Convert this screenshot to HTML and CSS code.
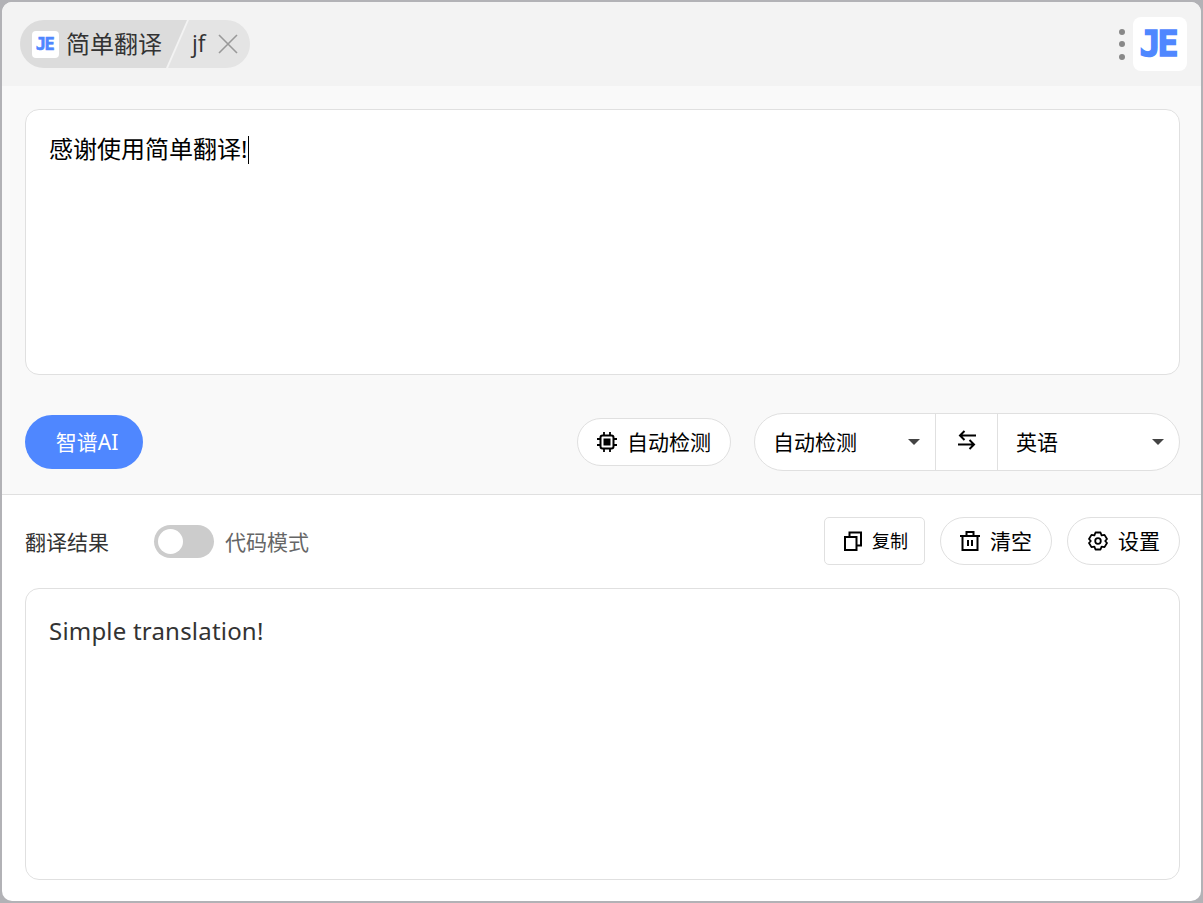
FILE: index.html
```html
<!DOCTYPE html>
<html lang="zh-CN">
<head>
    <meta charset="UTF-8">
    <title>简单翻译</title>
    <link rel="stylesheet" href="styles.css">
</head>
<body>

<div class="window">
    <header class="topbar">
        <div class="tab">
            <div class="tab-main">
                <span class="logo logo-small">JE</span>
                <span class="tab-name">简单翻译</span>
            </div>
            <div class="tab-key">
                <span class="tab-name tab-shortcut">jf</span>
                <svg class="tab-close" viewBox="0 0 20 20" width="20" height="20"><path d="M1 1 19 19M19 1 1 19"/></svg>
            </div>
        </div>
        <div class="topbar-right">
            <div class="dots"><i></i><i></i><i></i></div>
            <span class="logo logo-big">JE</span>
        </div>
    </header>

    <section class="input-panel">
        <div class="text-box input-box">感谢使用简单翻译!<span class="caret"></span></div>
        <div class="toolbar">
            <button class="engine-btn">智谱AI</button>
            <div class="toolbar-right">
                <button class="chip chip-narrow">
                    <svg viewBox="0 0 20 20" width="20" height="20">
                        <rect x="3.500" y="3.500" width="13" height="13" rx="2" fill="none" stroke="#000" stroke-width="2"/>
                        <rect x="6.500" y="6.500" width="7" height="7" fill="#000"/>
                        <path d="M7 0v3M13 0v3M7 17v3M13 17v3M0 7h3M0 13h3M17 7h3M17 13h3" stroke="#000" stroke-width="1.800"/>
                    </svg>
                    <span class="label">自动检测</span>
                </button>
                <div class="lang-picker">
                    <div class="lang lang-from"><span class="label">自动检测</span><i class="arrow"></i></div>
                    <div class="swap">
                        <svg viewBox="0 0 20 20" width="20" height="20"><path d="M19 5.500H3M7.500 1 3 5.500 7.500 10M1 14.500H17M12.500 10 17 14.500 12.500 19" fill="none" stroke="#000" stroke-width="2"/></svg>
                    </div>
                    <div class="lang lang-to"><span class="label">英语</span><i class="arrow"></i></div>
                </div>
            </div>
        </div>
    </section>

    <section class="result-panel">
        <div class="result-head">
            <span class="result-title">翻译结果</span>
            <div class="toggle"><i></i></div>
            <span class="toggle-label">代码模式</span>
            <div class="actions">
                <button class="chip copy-btn">
                    <svg viewBox="0 0 20 20" width="20" height="20"><path d="M2 6h11.500V19H2zM6.500 6V1.500H18V14.500h-4.500" fill="none" stroke="#000" stroke-width="2"/></svg>
                    <span class="label">复制</span>
                </button>
                <button class="chip chip-narrow">
                    <svg viewBox="0 0 20 20" width="20" height="20"><path d="M0 5h20M6.500 5V1h7V5M2.500 5v14h15V5M8 9v6M12 9v6" fill="none" stroke="#000" stroke-width="2"/></svg>
                    <span class="label">清空</span>
                </button>
                <button class="chip">
                    <svg viewBox="0 0 20 20" width="20" height="20"><path d="M7.500 1.500h5L13.600 4.300 16.500 3.900 19 8 17.200 10 19 12 16.500 16.100 13.600 15.700 12.500 18.500h-5L6.400 15.700 3.500 16.100 1 12 2.800 10 1 8 3.500 3.900 6.400 4.300Z" fill="none" stroke="#000" stroke-width="1.800" stroke-linejoin="round"/><circle cx="10" cy="10" r="2.800" fill="none" stroke="#000" stroke-width="1.800"/></svg>
                    <span class="label">设置</span>
                </button>
            </div>
        </div>
        <div class="text-box output-box">Simple translation!</div>
    </section>
</div>

</body>
</html>
```

FILE: styles.css
```css
* {
    box-sizing: border-box;
}
html, body {
    height: 100%;
}
body {
    margin: 0;
    padding: 2px;
    overflow: hidden;
    background-color: #b2b2b6;
    font-family: "Noto Sans", "Noto Sans CJK SC", sans-serif;
    font-size: 21px;
    color: #000;
}
button {
    font: inherit;
    color: inherit;
    cursor: pointer;
}
.window {
    height: 100%;
    display: flex;
    flex-direction: column;
    background: white;
    border-radius: 10px;
    overflow: hidden;
}

/* top bar */
.topbar {
    height: 84px;
    flex: none;
    display: flex;
    align-items: center;
    justify-content: space-between;
    padding: 0 14px 0 18px;
    background-color: #f3f3f3;
}
.tab {
    display: flex;
    height: 48px;
    width: 230px;
    border-radius: 24px;
    overflow: hidden;
    font-size: 24px;
    color: #333;
}
.tab-main {
    width: 167px;
    display: flex;
    align-items: center;
    gap: 7px;
    padding-left: 12px;
    background-color: #dcdcdc;
    clip-path: polygon(0 0, 100% 0, calc(100% - 21px) 100%, 0 100%);
}
.tab-key {
    flex: 1;
    margin-left: -19px;
    display: flex;
    align-items: center;
    gap: 12px;
    padding-left: 24px;
    background-color: #e4e4e4;
    clip-path: polygon(21px 0, 100% 0, 100% 100%, 0 100%);
}
.tab-name {
    margin-bottom: 3px;
}
.tab-shortcut {
    font-size: 23px;
    font-family: "Open Sans", sans-serif;
}
.tab-close path {
    fill: none;
    stroke: #999;
    stroke-width: 1.600;
}
.logo {
    display: flex;
    align-items: center;
    justify-content: center;
    flex: none;
    background: white;
    color: #4f87ff;
    font-family: "DejaVu Sans Mono", monospace;
    font-weight: bold;
}
.logo-small {
    width: 27px;
    height: 27px;
    padding-right: 2px;
    border-radius: 4px;
    font-size: 17px;
    letter-spacing: -1.500px;
    -webkit-text-stroke: 0.600px #4f87ff;
}
.logo-big {
    width: 54px;
    height: 54px;
    padding-right: 5px;
    border-radius: 8px;
    font-size: 35px;
    letter-spacing: -3px;
    -webkit-text-stroke: 1.500px #4f87ff;
}
.topbar-right {
    display: flex;
    align-items: center;
    gap: 8px;
}
.dots {
    display: flex;
    flex-direction: column;
    gap: 6.500px;
}
.dots i {
    width: 6px;
    height: 6px;
    border-radius: 50%;
    background-color: #888;
}

/* input */
.input-panel {
    flex: none;
    padding: 23px 21px 23px 23px;
    background-color: #f9f9f9;
    border-bottom: 1px solid #e0e0e0;
}
.text-box {
    background: white;
    border: 1px solid #e0e0e0;
    border-radius: 14px;
    padding: 22px 23px;
    font-size: 24px;
    line-height: 33px;
}
.input-box {
    height: 266px;
}
.caret {
    display: inline-block;
    width: 1px;
    height: 28px;
    margin-left: 1px;
    vertical-align: -6px;
    background-color: #000;
}
.toolbar {
    margin-top: 38px;
    display: flex;
    align-items: center;
    justify-content: space-between;
}
.toolbar-right {
    display: flex;
    align-items: center;
    gap: 23px;
}
.engine-btn {
    width: 118px;
    height: 54px;
    padding: 0 0 2px 6px;
    border: none;
    border-radius: 27px;
    background-color: #4f87ff;
    color: white;
}
.chip {
    height: 48px;
    display: flex;
    align-items: center;
    gap: 10px;
    padding: 0 19px 0 20px;
    background: white;
    border: 1px solid #e0e0e0;
    border-radius: 24px;
    white-space: nowrap;
}
.chip-narrow {
    padding-left: 19px;
}
.label {
    margin-bottom: 2px;
}
.lang-picker {
    width: 426px;
    height: 58px;
    display: flex;
    background: white;
    border: 1px solid #e0e0e0;
    border-radius: 29px;
}
.lang {
    display: flex;
    align-items: center;
    justify-content: space-between;
    padding: 0 15px 0 18px;
}
.lang-from {
    width: 180px;
    padding-left: 18px;
}
.lang-to {
    flex: 1;
    padding-left: 18px;
}
.arrow {
    width: 0;
    height: 0;
    border-left: 6.500px solid transparent;
    border-right: 6.500px solid transparent;
    border-top: 6px solid #444;
}
.swap {
    width: 63px;
    flex: none;
    display: flex;
    align-items: center;
    justify-content: center;
    padding-bottom: 4px;
    border-left: 1px solid #e0e0e0;
    border-right: 1px solid #e0e0e0;
}

/* result */
.result-panel {
    flex: 1;
    min-height: 0;
    display: flex;
    flex-direction: column;
    padding: 22px 21px 21px 23px;
}
.result-head {
    height: 48px;
    flex: none;
    display: flex;
    align-items: center;
    margin-bottom: 23px;
}
.result-title {
    color: #333;
}
.toggle {
    width: 60px;
    height: 33px;
    margin: 0 11px 0 45px;
    padding: 4px;
    border-radius: 17px;
    background-color: #ccc;
}
.toggle i {
    display: block;
    width: 25px;
    height: 25px;
    border-radius: 50%;
    background: white;
}
.toggle-label {
    color: #666;
}
.actions {
    margin-left: auto;
    display: flex;
    gap: 15px;
}
.copy-btn {
    border-radius: 5px;
    font-size: 18px;
    gap: 9px;
    padding: 0 16px 0 18px;
}
.output-box {
    flex: 1;
    padding-top: 25px;
    letter-spacing: 0.200px;
    color: #333;
}
```
